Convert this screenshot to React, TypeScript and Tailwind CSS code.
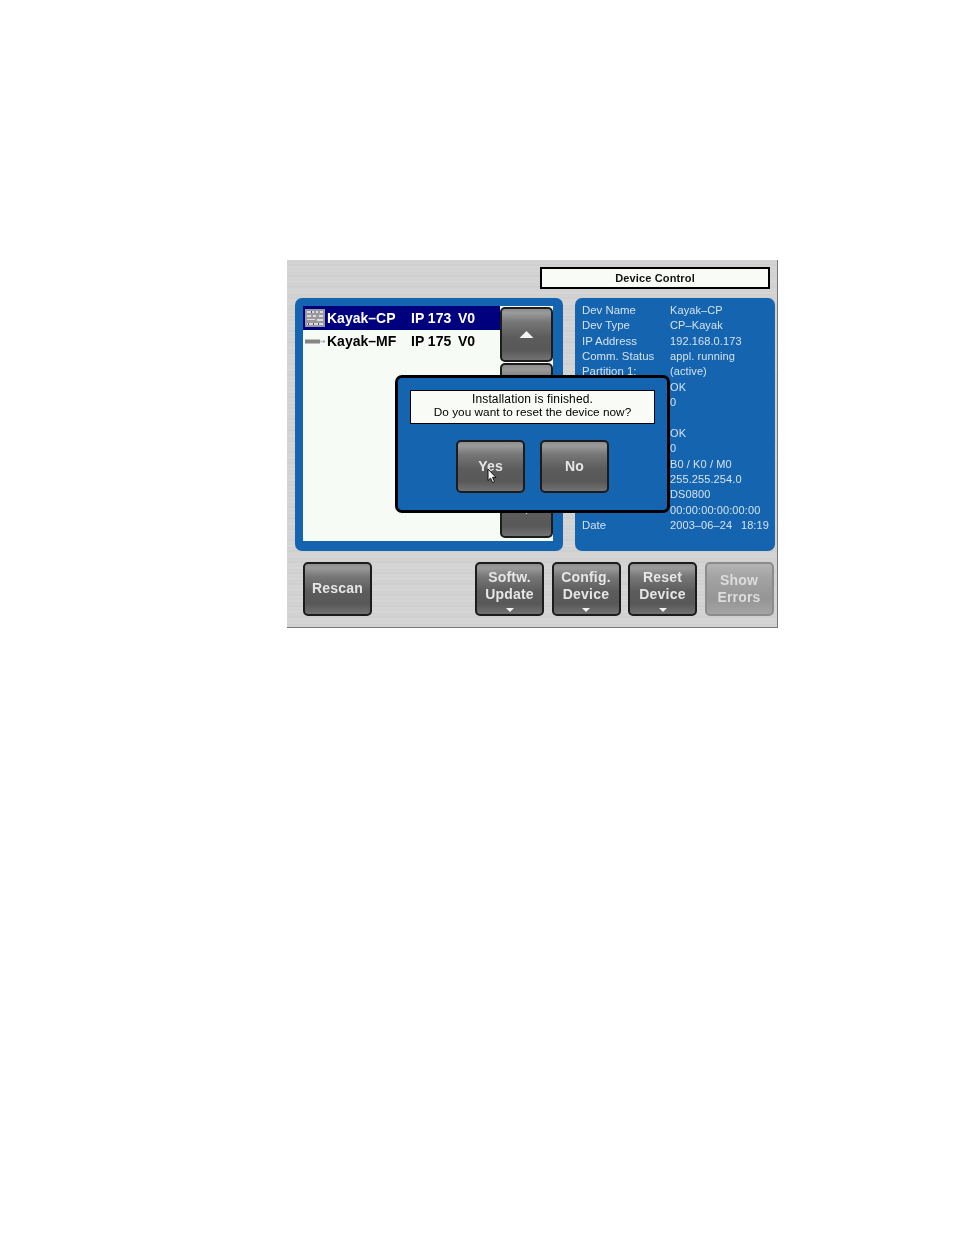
const metal =
  'bg-[repeating-linear-gradient(180deg,#d7d7d7_0px,#cfcfcf_2px,#d5d5d5_3px,#cdcdcd_5px,#d6d6d6_7px,#d1d1d1_9px,#d8d8d8_11px)]';

const raised =
  'border-[#1c1c1c] bg-[linear-gradient(180deg,#8e8e8e_0%,#9a9a9a_8%,#777777_25%,#5c5c5c_55%,#585858_80%,#727272_100%)]';

const infoRows: [string, string][] = [
  ['Dev Name', 'Kayak–CP'],
  ['Dev Type', 'CP–Kayak'],
  ['IP Address', '192.168.0.173'],
  ['Comm. Status', 'appl. running'],
  ['Partition 1:', '(active)'],
  ['', 'OK'],
  ['', '0'],
  ['', ''],
  ['', 'OK'],
  ['', '0'],
  ['', 'B0 / K0 / M0'],
  ['', '255.255.254.0'],
  ['', 'DS0800'],
  ['', '00:00:00:00:00:00'],
  ['Date', '2003–06–24\u2002 18:19'],
];

function Arrow({ down = false, small = false }: { down?: boolean; small?: boolean }) {
  const size = small ? 'w-[9px] h-[4px]' : 'w-[15px] h-[7px]';
  return (
    <svg viewBox="0 0 10 5" className={`${size} block`} aria-hidden="true">
      <path d={down ? 'M0 0H10L5 5Z' : 'M0 5H10L5 0Z'} fill="#f2f2f2" />
    </svg>
  );
}

function MetalButton({
  lines,
  arrow = false,
  disabled = false,
  className = 'w-[69px] h-[54px]',
}: {
  lines: string[];
  arrow?: boolean;
  disabled?: boolean;
  className?: string;
}) {
  const look = disabled
    ? 'border-[#8c8c8c] bg-[linear-gradient(180deg,#b4b4b4_0%,#a4a4a4_25%,#959595_70%,#a4a4a4_100%)] text-[#dcdcdc]'
    : `${raised} text-[#e6e6e6]`;
  return (
    <div
      className={`relative shrink-0 flex flex-col items-center justify-center rounded-[5px] border-2 font-bold text-[14px] leading-[17.5px] tracking-[0.2px] ${
        arrow ? 'pb-[6px]' : ''
      } ${look} ${className}`}
    >
      {lines.map((line) => (
        <span key={line}>{line}</span>
      ))}
      {arrow && (
        <span className="absolute bottom-[2px] left-1/2 -translate-x-1/2">
          <Arrow down small />
        </span>
      )}
    </div>
  );
}

function DeviceIcon() {
  return (
    <svg viewBox="0 0 20 18" className="w-[20px] h-[18px] block" aria-hidden="true">
      <rect width="20" height="18" fill="#9a9a9e" />
      <path d="M2 2h7v2H2zM11 2h2v2h-2zM15 2h3v2h-3zM2 6h4v2H2zM8 6h3v2H8zM14 6h4v2h-4zM2 10h8v1H2zM12 10h6v2h-6zM2 14h16v2H2z" fill="#dcdce0" />
      <path d="M6 2h1v2H6zM3 14h1v2H3zM8 14h1v2H8zM13 14h1v2h-1z" fill="#55555a" />
    </svg>
  );
}

function BarIcon() {
  return (
    <svg viewBox="0 0 20 5" className="w-[20px] h-[5px] block" aria-hidden="true">
      <rect width="15" height="4" y="0.5" fill="#858585" />
      <rect x="15.5" y="1.5" width="2" height="2" fill="#b5b5c8" />
      <rect x="18" y="1.5" width="2" height="2" fill="#9a9ab5" />
    </svg>
  );
}

function DeviceRow({
  name,
  ip,
  selected = false,
  icon,
}: {
  name: string;
  ip: string;
  selected?: boolean;
  icon: React.ReactNode;
}) {
  return (
    <div
      className={`flex items-center h-[23.5px] pl-[2px] pt-[1px] font-bold text-[14px] ${
        selected ? 'bg-[#00007f] text-white' : 'text-black'
      }`}
    >
      <div className="w-[22px] flex items-center">{icon}</div>
      <div className="w-[84px]">{name}</div>
      <div className="w-[47px]">{ip}</div>
      <div>V0</div>
    </div>
  );
}

export default function App() {
  return (
    <div className="min-h-[1235px] bg-white pt-[260px] pl-[287px] font-['Liberation_Sans',Arial,sans-serif]">
      <div
        className={`relative w-[491px] h-[368px] px-[8px] flex flex-col border-r border-b border-[#777777] blur-[0.4px] ${metal}`}
      >
        {/* title */}
        <div className="flex justify-end pt-[7px] -mr-[1px]">
          <div className="w-[230px] h-[22px] border-2 border-black bg-[#f8fbf6] flex items-center justify-center text-[11px] font-bold tracking-[0.15px] text-[#111111]">
            Device Control
          </div>
        </div>

        <div className="flex mt-[9px] h-[253px] gap-[12px]">
          {/* device list */}
          <div className="w-[268px] shrink-0 rounded-[7px] bg-[#1464b0] pt-[8px] pr-[10px] pb-[10px] pl-[8px]">
            <div className="flex h-full bg-[#f7fbf6]">
              <div className="w-[197px]">
                <DeviceRow name="Kayak–CP" ip="IP 173" selected icon={<DeviceIcon />} />
                <DeviceRow name="Kayak–MF" ip="IP 175" icon={<BarIcon />} />
              </div>
              <div className="w-[53px] pt-[1px] flex flex-col gap-[1px]">
                <div className={`flex items-center justify-center h-[55px] rounded-[5px] border-2 ${raised}`}>
                  <Arrow />
                </div>
                <div className={`h-[59px] rounded-[5px] border-2 ${raised}`} />
                <div className={`h-[59px] rounded-[5px] border-2 ${raised}`} />
                <div className={`flex items-center justify-center h-[55px] rounded-[5px] border-2 ${raised}`}>
                  <Arrow down />
                </div>
              </div>
            </div>
          </div>

          {/* device info */}
          <div className="w-[200px] shrink-0 rounded-[7px] bg-[#1464b0] pt-[5px] pl-[7px] text-[#d6e2ee] leading-[15.36px]">
            {infoRows.map(([label, value], i) => (
              <div key={i} className="flex h-[15.36px]">
                <div className="w-[88px] text-[11.4px] font-medium">{label}</div>
                <div className="whitespace-pre text-[11px] tracking-[0.1px]">{value}</div>
              </div>
            ))}
          </div>
        </div>

        {/* bottom buttons */}
        <div className="flex items-start mt-[11px] pl-[8px]">
          <MetalButton lines={['Rescan']} />
          <div className="ml-[103px] flex gap-[7.5px]">
            <MetalButton lines={['Softw.', 'Update']} arrow />
            <MetalButton lines={['Config.', 'Device']} arrow />
            <MetalButton lines={['Reset', 'Device']} arrow />
            <MetalButton lines={['Show', 'Errors']} disabled />
          </div>
        </div>

        {/* dialog */}
        <div className="absolute left-[108px] top-[115px] w-[275px] h-[138px] rounded-[7px] border-[3px] border-black bg-[#1464b0] flex flex-col items-center pt-[12px]">
          <div className="w-[245px] h-[34px] pb-[2px] border border-black bg-[#f8fbf6] flex flex-col items-center justify-center text-[12px] leading-[13px] text-black">
            <span className="tracking-[0.15px]">Installation is finished.</span>
            <span className="text-[11.8px] tracking-[0.02px]">Do you want to reset the device now?</span>
          </div>
          <div className="flex gap-[15px] mt-[16px]">
            <div className="relative">
              <MetalButton lines={['Yes']} className="w-[69px] h-[53px]" />
              <svg viewBox="0 0 10 16" className="absolute left-[31px] top-[28px] w-[10px] h-[16px]" aria-hidden="true">
                <path d="M1 1V12.5L3.6 10.2L5.6 14.6L7.6 13.7L5.6 9.4H9Z" fill="#f4f4f4" stroke="#111111" strokeWidth="1" />
              </svg>
            </div>
            <MetalButton lines={['No']} className="w-[69px] h-[53px]" />
          </div>
        </div>
      </div>
    </div>
  );
}
